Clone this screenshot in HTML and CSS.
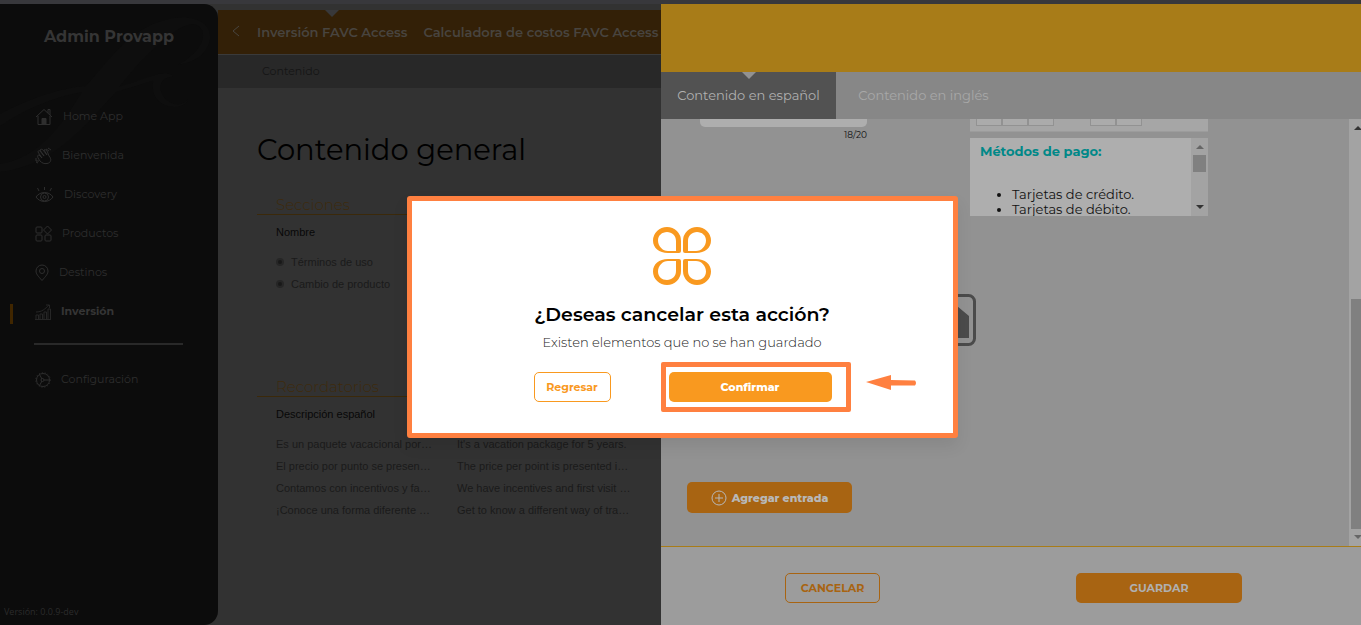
FILE: index.html
```html
<!DOCTYPE html>
<html lang="es">
<head>
<meta charset="utf-8">
<title>Admin Provapp</title>
<link rel="stylesheet" href="styles.css">
</head>
<body>
<div class="app">
  <aside class="sidebar">
    <svg class="flourish" viewBox="0 0 218 170" aria-hidden="true"><path d="M0 110C30 94 60 84 86 82C110 55 130 25 165 16C192 9 212 18 210 35C208 49 196 58 178 61C194 52 207 38 202 26C192 9 166 33 145 53C134 64 127 74 119 83L158 70C170 68 176 72 170 73C154 76 160 96 174 100C182 102 188 97 188 94C188 106 160 107 154 90C151 80 155 76 152 77L116 88C88 118 55 162 0 168V160C40 154 62 120 82 88C50 94 24 106 0 122Z"/></svg>
    <h2 class="brand">Admin Provapp</h2>
    <nav class="menu">
      <a class="item" href="#"><svg width="18" height="18" viewBox="0 0 18 18"><path d="M1 9L9 1.500L17 9M3 8V16.500H15V8M13 5V1.500H15V7"/><path class="solid" d="M7 16V10.500H11V16Z"/></svg>Home App</a>
      <a class="item" href="#"><svg width="17" height="18" viewBox="0 0 17 18"><path d="M5 14C2 10 2 8 4 8L7 11L3 5C3 4 4 3 5 4L9 9L5 3C6 2 7 2 8 3L12 8L9 3C10 2 11 3 12 4L14 9C17 12 16 16 12 16.500C9 17 7 16 5 14M11 2L14 4M13 1L16 3M1 11V14H4M1 15L3 16"/></svg>Bienvenida</a>
      <a class="item" href="#"><svg width="19" height="18" viewBox="0 0 19 18"><path d="M1 11C5 5 14 5 18 11C14 17 5 17 1 11M9.500 4V1M4 5L2.500 2M15 5L16.500 2"/><circle cx="9.500" cy="11" r="4"/><circle cx="9.500" cy="11" r="1.500"/></svg>Discovery</a>
      <a class="item" href="#"><svg width="17" height="18" viewBox="0 0 17 18"><rect x="1" y="2" width="6" height="6" rx="1"/><rect x="1" y="10" width="6" height="6" rx="1"/><rect x="10" y="10" width="6" height="6" rx="1"/><path d="M12.500 1L16.500 5L12.500 9L8.500 5Z"/></svg>Productos</a>
      <a class="item" href="#"><svg width="14" height="18" viewBox="0 0 14 18"><path d="M7 16.500C3 12 1 10 1 7A6 6 0 0 1 13 7C13 10 11 12 7 16.500Z"/><circle cx="7" cy="7" r="2.500"/></svg>Destinos</a>
      <a class="item active" href="#"><svg width="16" height="18" viewBox="0 0 16 18"><path d="M1 16.500V12H3.500V16.500M5 16.500V11H7.500V16.500M9 16.500V9H11.500V16.500M13 16.500V6H15.500V16.500M0 16.500H16M1 9C7 9 10 6 14 2M11 2H14.500V5"/></svg>Inversión</a>
      <hr class="rule">
      <a class="item" href="#"><svg width="16" height="18" viewBox="0 0 16 18"><circle cx="8" cy="9" r="6.500"/><circle class="teeth" cx="8" cy="9" r="7.300"/><circle cx="7.500" cy="9" r="1.500"/><path d="M9 9H14.500M7 8L4.500 3.500M7 10L4.500 14.500"/></svg>Configuración</a>
    </nav>
    <small class="version">Versión: 0.0.9-dev</small>
  </aside>

  <main class="main">
    <nav class="tabs">
      <button class="back" type="button" aria-label="Volver"><svg width="8" height="12" viewBox="0 0 8 12"><path d="M7 1L1 6L7 11"/></svg></button>
      <a class="tab current" href="#">Inversión FAVC Access</a>
      <a class="tab" href="#">Calculadora de costos FAVC Access</a>
    </nav>
    <div class="subbar"><a href="#">Contenido</a></div>
    <div class="content">
      <h1>Contenido general</h1>
      <section class="block">
        <h3>Secciones</h3>
        <p class="label">Nombre</p>
        <ul class="terms">
          <li><i></i>Términos de uso</li>
          <li><i></i>Cambio de producto</li>
        </ul>
      </section>
      <section class="block">
        <h3>Recordatorios</h3>
        <table class="reminders">
          <thead><tr><th>Descripción español</th><th></th></tr></thead>
          <tbody>
            <tr><td>Es un paquete vacacional por…</td><td>It's a vacation package for 5 years.</td></tr>
            <tr><td>El precio por punto se presen…</td><td>The price per point is presented i…</td></tr>
            <tr><td>Contamos con incentivos y fa…</td><td>We have incentives and first visit …</td></tr>
            <tr><td>¡Conoce una forma diferente …</td><td>Get to know a different way of tra…</td></tr>
          </tbody>
        </table>
      </section>
    </div>
  </main>

  <section class="drawer">
    <header class="drawer-head"></header>
    <nav class="lang">
      <button class="lang-tab selected" type="button">Contenido en español</button>
      <button class="lang-tab" type="button">Contenido en inglés</button>
    </nav>
    <div class="pane">
      <div class="form">
        <div class="fields">
          <div class="title-field">
            <input class="title-input" type="text" aria-label="Título">
            <span class="count">18/20</span>
          </div>
          <div class="editor">
            <div class="toolbar">
              <div class="group"><button type="button" aria-label="Negrita"></button><button type="button" aria-label="Cursiva"></button><button type="button" aria-label="Subrayado"></button></div>
              <div class="group"><button type="button" aria-label="Lista"></button><button type="button" aria-label="Lista numerada"></button></div>
            </div>
            <div class="editbox">
              <div class="text">
                <strong>Métodos de pago:</strong>
                <ul><li>Tarjetas de crédito.</li><li>Tarjetas de débito.</li></ul>
              </div>
              <div class="scroll"><span class="up"></span><span class="thumb"></span><span class="down"></span></div>
            </div>
          </div>
        </div>
        <svg class="picture" width="52" height="52" viewBox="0 0 52 52"><rect x="1.500" y="1.500" width="49" height="49" rx="6"/><path d="M8 44V28L18 20L26 28L33 12L45 22V44Z"/></svg>
        <button class="add" type="button"><svg width="16" height="16" viewBox="0 0 16 16"><circle cx="8" cy="8" r="7"/><path d="M8 4V12M4 8H12"/></svg>Agregar entrada</button>
      </div>
      <div class="scroll page-scroll"><span class="up"></span><span class="thumb"></span><span class="down"></span></div>
    </div>
    <footer class="drawer-foot">
      <button class="btn cancel" type="button">CANCELAR</button>
      <button class="btn save" type="button">GUARDAR</button>
    </footer>
  </section>

  <div class="modal" role="dialog" aria-labelledby="ask">
    <svg class="logo" width="60" height="60" viewBox="0 0 60 60" aria-hidden="true">
      <defs><path id="petal" fill-rule="evenodd" d="M14 1A14 14 0 0 1 28 15V25Q28 27 26 27H15C6 27 0 22 0 14.500A14 13.500 0 0 1 14 1ZM14 6C9 6 5 9.500 5 14.500C5 20 9.500 25 15 25H23V15C23 9.500 19 6 14 6Z"/></defs>
      <use href="#petal" x="1"/>
      <use href="#petal" transform="translate(59 0) scale(-1 1)"/>
      <use href="#petal" x="1" transform="translate(0 60) scale(1 -1)"/>
      <use href="#petal" transform="translate(59 60) scale(-1 -1)"/>
    </svg>
    <h2 id="ask">¿Deseas cancelar esta acción?</h2>
    <p>Existen elementos que no se han guardado</p>
    <div class="actions">
      <button class="btn return" type="button">Regresar</button>
      <div class="highlight"><button class="btn confirm" type="button">Confirmar</button></div>
      <svg class="arrow" width="52" height="16" viewBox="0 0 52 16" aria-hidden="true"><path d="M0 7L25 0V5L49 5.500Q51 8 49 10.500H25V15Z"/></svg>
    </div>
  </div>
</div>
</body>
</html>
```
FILE: styles.css
```css
* { box-sizing: border-box; }
body { margin: 0; font-family: Montserrat, Inter, sans-serif; background: #323232; }
h1, h2, h3, p, ul { margin: 0; padding: 0; font-weight: 400; }
ul { list-style: none; }
a { color: inherit; text-decoration: none; }
button { font-family: inherit; padding: 0; border: 0; background: none; }
svg { fill: none; stroke: currentColor; flex: none; }

.app { position: relative; display: flex; min-height: 100vh; border-top: 4px solid #38383c; overflow: hidden; }

.sidebar { position: relative; width: 218px; flex: none; display: flex; flex-direction: column; background: #0c0c0c; border-radius: 0 14px 14px 0; color: #2e2e2e; }
.flourish { position: absolute; left: 0; top: 0; width: 100%; fill: #0e0e0e; stroke: none; }
.brand { position: relative; padding-top: 23px; font-size: 16px; line-height: 20px; font-weight: 700; text-align: center; color: #353535; }
.menu { position: relative; padding: 49px 0 0 35px; }
.item { display: flex; align-items: center; gap: 10px; height: 39px; font-size: 11px; }
.item svg { margin-top: 2px; }
.item .solid { fill: currentColor; }
.item .teeth { stroke-dasharray: 1 2; }
.active { position: relative; font-weight: 700; color: #353535; }
.active svg { color: #262626; }
.active::before { content: ""; position: absolute; left: -25px; top: 13px; width: 3px; height: 20px; background: #402600; }
.rule { width: 149px; height: 2px; margin: 13px 0 14px -1px; border: 0; background: #292929; }
.version { margin: auto 0 5px 4px; font: 9px/16px "Open Sans", sans-serif; color: #2b2b2b; }

.main { flex: 1; min-width: 0; padding-top: 6px; }
.tabs { display: flex; align-items: center; gap: 16px; height: 45px; padding-left: 13px; background: #332007; border-bottom: 1px solid #3a3a3a; color: #48443f; font-size: 13px; font-weight: 600; white-space: nowrap; }
.back { width: 10px; color: inherit; }
.tab { position: relative; line-height: 44px; }
.current::before { content: ""; position: absolute; top: 0; left: 50%; margin-left: -7px; border: 7px solid transparent; border-top-color: #38383a; border-bottom: 0; }
.subbar { padding-left: 44px; height: 33px; line-height: 32px; background: #282828; color: #151515; font-size: 11px; font-weight: 400; }
.content { padding: 42px 40px 0 39px; }
h1 { font-size: 29px; line-height: 40px; color: #000; }
.block { height: 182px; font: 11px/22px "Liberation Sans", sans-serif; color: #1a1a1a; }
h1 + .block { margin-top: 25px; }
h3 { padding-left: 19px; font: 300 15px/19px Montserrat, Inter, sans-serif; color: #3e2a0c; border-bottom: 1px solid #3b290a; }
.label { padding: 6px 19px 8px; color: #080808; }
.terms { padding-left: 19px; }
.terms li { display: flex; align-items: center; gap: 7px; }
.terms i { width: 8px; height: 8px; border-radius: 50%; border: 2px solid #262626; background: #181818; }
.reminders { margin-left: 19px; border-spacing: 0; }
.reminders th { height: 36px; padding: 6px 0 8px; text-align: left; font-weight: 400; color: #080808; }
.reminders td { width: 181px; padding: 0; white-space: nowrap; }

.drawer { position: absolute; top: 0; right: 0; bottom: 0; width: 700px; display: flex; flex-direction: column; background: #929292; }
.drawer-head { height: 68px; flex: none; background: #a87c18; }
.lang { display: flex; flex: none; height: 47px; background: #878787; }
.lang-tab { position: relative; width: 175px; padding-bottom: 2px; color: #a8a8a8; font-size: 13px; }
.selected { background: #525252; color: #b0b0b0; }
.selected::before { content: ""; position: absolute; top: 0; left: 50%; margin-left: -7px; border: 7px solid transparent; border-top-color: #929292; border-bottom: 0; }
.pane { flex: 1; min-height: 0; display: flex; overflow: hidden; }
.form { flex: 1; display: flex; flex-direction: column; align-items: flex-start; padding-left: 26px; }
.fields { display: flex; gap: 103px; padding-left: 13px; }
.title-field { width: 167px; display: flex; flex-direction: column; }
.title-input { width: 100%; height: 8px; padding: 0; border: 0; border-radius: 0 0 5px 5px; background: #aeaeae; }
.count { font-size: 9px; line-height: 16px; text-align: right; color: #111; }
.editor { width: 238px; }
.toolbar { display: flex; gap: 36px; height: 13px; padding-left: 6px; background: #a6a6a6; border-bottom: 1px solid #9c9c9c; }
.group { display: flex; }
.group button { width: 26px; height: 7px; border: 1px solid #929292; border-top: 0; background: #ababab; }
.editbox { display: flex; height: 78px; margin-top: 6px; background: #aeaeae; overflow: hidden; }
.text { flex: 1; padding: 6px 10px; font-size: 13px; line-height: 15px; font-weight: 300; color: #111; }
.text strong { display: block; font-weight: 700; color: #088; }
.text ul { margin-top: 28px; padding-left: 32px; list-style: disc; }
.scroll { width: 17px; flex: none; display: flex; flex-direction: column; align-items: center; background: #a3a3a3; }
.up, .down { border: 4px solid transparent; }
.up { margin: 7px 0 6px; border-top: 0; border-bottom-color: #666; }
.down { margin: auto 0 7px; border-bottom: 0; border-top-color: #333; }
.thumb { width: 13px; height: 17px; background: #808080; }
.page-scroll { margin-right: -5px; }
.page-scroll .up { border-bottom-color: #333; }
.page-scroll .down { border-top-color: #666; }
.page-scroll .thumb { height: 230px; margin-top: 163px; }
.picture { margin: 78px 0 0 237px; stroke: #4b4b4b; stroke-width: 3; }
.picture path { fill: #4b4b4b; stroke: none; }
.add { display: flex; align-items: center; justify-content: center; gap: 5px; width: 165px; height: 31px; margin-top: 136px; border-radius: 5px; background: #a86412; color: #b8b8b8; font-size: 11px; font-weight: 800; }
.drawer-foot { display: flex; flex: none; justify-content: space-between; height: 79px; padding: 26px 119px 0 124px; border-top: 1px solid #a87c18; background: #9c9c9c; }
.btn { height: 30px; border-radius: 5px; font-size: 11px; font-weight: 700; }
.cancel { width: 95px; border: 1px solid #a86412; color: #a86412; }
.save { width: 166px; background: #a86412; color: #b0b0b0; }

.modal { position: absolute; top: 192px; left: 50%; width: 551px; margin-left: -274px; padding: 25px 0 21px; border: 5px solid #ff8040; border-radius: 3px; background: #fff; text-align: center; box-shadow: 0 8px 16px rgba(0, 0, 0, .08); }
.logo { display: block; margin: 0 auto; fill: #f9991f; stroke: none; }
.modal h2 { margin-top: 17px; font-size: 19px; line-height: 24px; font-weight: 600; color: #000; }
.modal p { margin-top: 6px; font-size: 13px; line-height: 18px; font-weight: 300; color: #222; }
.actions { display: flex; align-items: center; margin-top: 11px; padding-left: 122px; }
.return { width: 77px; border: 1px solid #f9991f; color: #f9991f; }
.highlight { display: flex; width: 190px; margin-left: 50px; padding: 5px 3px; border: 5px solid #ff8040; border-radius: 2px; }
.confirm { width: 163px; background: #f9991f; color: #fff; font-weight: 800; }
.arrow { margin: 0 0 8px 15px; fill: #ff8040; stroke: none; }
```
